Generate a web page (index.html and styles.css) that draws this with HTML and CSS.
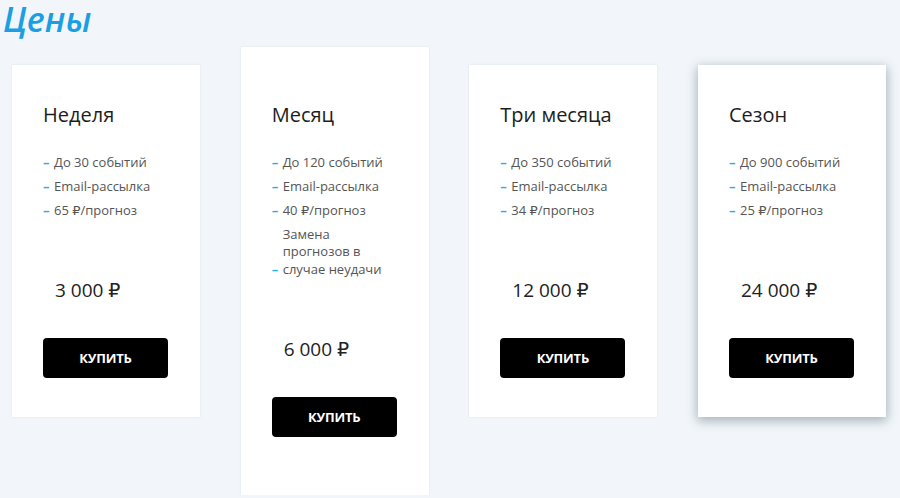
FILE: index.html
```html
<!DOCTYPE html>
<html lang="ru">
<head>
<meta charset="utf-8">
<title>Цены</title>
<link rel="stylesheet" href="styles.css">
</head>
<body>
<h1 class="page-title">Цены</h1>
<div class="plans">
  <div class="plan">
    <h2 class="plan-name">Неделя</h2>
    <ul class="features">
      <li><span class="dash">–</span><span class="feat">До 30 событий</span></li>
      <li><span class="dash">–</span><span class="feat">Email-рассылка</span></li>
      <li><span class="dash">–</span><span class="feat">65 ₽/прогноз</span></li>
    </ul>
    <div class="price">3 000 ₽</div>
    <button class="buy">КУПИТЬ</button>
  </div>
  <div class="plan plan-featured">
    <h2 class="plan-name">Месяц</h2>
    <ul class="features">
      <li><span class="dash">–</span><span class="feat">До 120 событий</span></li>
      <li><span class="dash">–</span><span class="feat">Email-рассылка</span></li>
      <li><span class="dash">–</span><span class="feat">40 ₽/прогноз</span></li>
      <li><span class="dash">–</span><span class="feat">Замена прогнозов в случае неудачи</span></li>
    </ul>
    <div class="price">6 000 ₽</div>
    <button class="buy">КУПИТЬ</button>
  </div>
  <div class="plan">
    <h2 class="plan-name">Три месяца</h2>
    <ul class="features">
      <li><span class="dash">–</span><span class="feat">До 350 событий</span></li>
      <li><span class="dash">–</span><span class="feat">Email-рассылка</span></li>
      <li><span class="dash">–</span><span class="feat">34 ₽/прогноз</span></li>
    </ul>
    <div class="price">12 000 ₽</div>
    <button class="buy">КУПИТЬ</button>
  </div>
  <div class="plan plan-hover">
    <h2 class="plan-name">Сезон</h2>
    <ul class="features">
      <li><span class="dash">–</span><span class="feat">До 900 событий</span></li>
      <li><span class="dash">–</span><span class="feat">Email-рассылка</span></li>
      <li><span class="dash">–</span><span class="feat">25 ₽/прогноз</span></li>
    </ul>
    <div class="price">24 000 ₽</div>
    <button class="buy">КУПИТЬ</button>
  </div>
</div>
</body>
</html>
```
FILE: styles.css
```css
html, body {
  margin: 0;
  padding: 0;
  background: #f2f6fa;
  font-family: "Open Sans", "DejaVu Sans", sans-serif;
  overflow: hidden;
}

.page-title {
  margin: -4px 0 -4px;
  padding-left: 3px;
  font-size: 34px;
  line-height: 46px;
  font-style: italic;
  font-weight: 600;
  color: #1b9fe2;
}

.plans {
  display: flex;
  align-items: flex-start;
  gap: 40.67px;
  padding: 27px 14px 0 12px;
}

.plan {
  flex: 0 0 188px;
  box-sizing: border-box;
  background: #fff;
  padding: 36px 20px 38.5px 31px;
  box-shadow: 0 0 2px rgba(120, 140, 160, 0.18);
}

.plan-featured {
  margin-top: -18px;
  padding-top: 54px;
  padding-bottom: 58px;
}

.plan-hover {
  box-shadow: 0 3px 10px 1px rgba(70, 100, 110, 0.45);
}

.plan-name {
  margin: 0 0 24.5px;
  font-size: 20px;
  line-height: 28px;
  font-weight: 400;
  color: #1d1d1d;
  white-space: nowrap;
}

.features {
  list-style: none;
  margin: 0;
  padding: 0;
  font-size: 13px;
  line-height: 17.5px;
  color: #555;
}

.features li {
  margin-bottom: 6.5px;
  white-space: nowrap;
}

.features li:last-child {
  margin-bottom: 0;
}

.dash {
  display: inline-block;
  width: 11px;
  color: #1fb1ea;
  font-weight: 700;
  vertical-align: baseline;
}

.feat {
  display: inline-block;
  max-width: 106px;
  white-space: normal;
  vertical-align: baseline;
}

.price {
  margin-top: 58px;
  padding-left: 12px;
  font-size: 19px;
  line-height: 26px;
  color: #222;
}

.buy {
  display: block;
  margin-top: 35px;
  width: 125px;
  height: 40px;
  border: 0;
  border-radius: 4px;
  background: #000;
  color: #fff;
  font-family: "Open Sans", "DejaVu Sans", sans-serif;
  font-weight: 700;
  font-size: 13px;
  letter-spacing: -0.2px;
  cursor: pointer;
}
```
